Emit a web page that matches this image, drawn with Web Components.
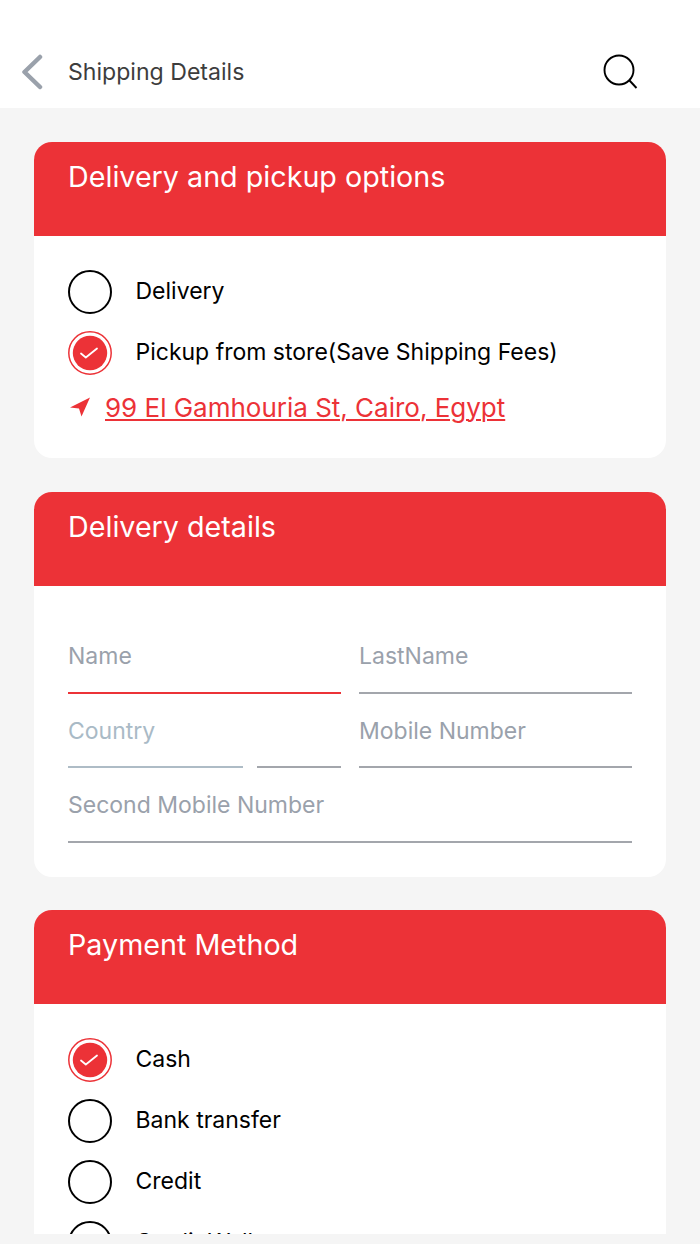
<!DOCTYPE html>
<html><head><meta charset="utf-8">
<style>
html,body{margin:0;padding:0;background:#f5f5f5}
body{width:700px;height:1244px;overflow:hidden;font-family:Inter,"Noto Sans",sans-serif}
.rows{display:flex;flex-direction:column;gap:17px;padding:34px 0}
.link{display:flex;align-items:center;gap:15px;height:32px;color:#ec3237;font-size:26px}
.link u{position:relative;top:-1px;text-underline-offset:2px;text-decoration-thickness:1.5px;letter-spacing:-.01px}
.link svg{display:block;flex:none}
.form{display:grid;grid-template-columns:273px 273px;column-gap:18px;padding:34px 0 33.5px}
.full{grid-column:1 / 3}
.pair{display:flex;gap:14px}
.pair form-field:first-child{width:175px;flex:none}
.pair form-field:last-child{flex:1}
.third{margin-top:-.5px}
</style></head><body>
<app-screen>
  <app-header heading="Shipping Details"></app-header>
  <app-content>
    <app-card heading="Delivery and pickup options">
      <div class="rows">
        <radio-row label="Delivery"></radio-row>
        <radio-row label="Pickup from store(Save Shipping Fees)" checked></radio-row>
        <div class="link"><svg width="22" height="22" viewBox="0 0 22 22"><path d="M22 .5 L2 10.5 L11 11.5 L13.5 19.5 Z" fill="#ec3237"/></svg><u>99 El Gamhouria St, Cairo, Egypt</u></div>
      </div>
    </app-card>
    <app-card heading="Delivery details">
      <div class="form">
        <form-field label="Name" active></form-field>
        <form-field label="LastName"></form-field>
        <div class="pair"><form-field label="Country" pale></form-field><form-field label=""></form-field></div>
        <form-field label="Mobile Number"></form-field>
        <form-field class="full" label="Second Mobile Number"></form-field>
      </div>
    </app-card>
    <app-card class="third" heading="Payment Method">
      <div class="rows">
        <radio-row label="Cash" checked></radio-row>
        <radio-row label="Bank transfer"></radio-row>
        <radio-row label="Credit"></radio-row>
        <radio-row label="Credit Wallet"></radio-row>
      </div>
    </app-card>
  </app-content>
</app-screen>
<script>
const def=(n,css,html)=>{customElements.define(n,class extends HTMLElement{
  constructor(){super();this.attachShadow({mode:'open'});}
  connectedCallback(){this.shadowRoot.innerHTML='<style>'+css+'</style>'+(typeof html==='function'?html(this):html);}
});};
def('app-screen',`:host{display:block;height:1234px;overflow:hidden}`,`<slot></slot>`);
def('app-content',`:host{display:flex;flex-direction:column;gap:33.75px;padding:34px 34px 0}`,`<slot></slot>`);
def('app-header',`:host{display:flex;align-items:center;height:108px;box-sizing:border-box;padding:35px 62px 0 21px;background:#fff}
 .t{flex:1;margin-left:25px;font-size:23.1px;color:#3d3d3d}
 svg{display:block}`,
 h=>`<svg width="22" height="36" viewBox="0 0 22 36"><path d="M19 3 L3.5 18 L19 33" fill="none" stroke="#9aa1ab" stroke-width="4.5" stroke-linecap="round" stroke-linejoin="round"/></svg><span class="t">${h.getAttribute('heading')}</span>
 <svg width="35" height="36" viewBox="0 0 35 36"><circle cx="16" cy="16" r="14.5" fill="none" stroke="#000" stroke-width="1.9"/><path d="M26.5 26.5 L33.5 34" stroke="#000" stroke-width="1.9"/></svg>`);
def('app-card',`:host{display:block;background:#fff;border-radius:18px;overflow:hidden;flex:none}
 .h{background:#ec3237;height:94px;box-sizing:border-box;padding:17px 34px 0;color:#fff;font-size:28.7px;line-height:36px}
 .b{padding:0 34px}`,
 h=>`<div class="h">${h.getAttribute('heading')}</div><div class="b"><slot></slot></div>`);
def('radio-row',`:host{display:flex;align-items:center;gap:23.5px;height:44px;font-size:23px;color:#000}
 svg{display:block;flex:none}
 span{margin-bottom:1.5px}`,
 h=>(h.hasAttribute('checked')
  ?`<svg width="44" height="44" viewBox="0 0 44 44"><circle cx="22" cy="22" r="21.2" fill="none" stroke="#ec3237" stroke-width="1.5"/><circle cx="22" cy="22" r="17.2" fill="#ec3237"/><path d="M13 22.5 L17.8 26.5 L29 17.5" fill="none" stroke="#fff" stroke-width="1.8" stroke-linecap="round" stroke-linejoin="round"/></svg>`
  :`<svg width="44" height="44" viewBox="0 0 44 44"><circle cx="22" cy="22" r="21" fill="none" stroke="#000" stroke-width="2"/></svg>`)+`<span>${h.getAttribute('label')}</span>`);
def('form-field',`:host{display:block;height:74.5px;box-sizing:border-box}
 .l{height:74px;box-sizing:border-box;padding-top:22.5px;line-height:28px;font-size:23px;color:#9aa1ab;border-bottom:2px solid #a3a6ac}
 :host([active]) .l{border-bottom-color:#ec3237}
 :host([pale]) .l{color:#a9bac6;border-bottom-color:#aebcc6}`,
 h=>`<div class="l">${h.getAttribute('label')||'&nbsp;'}</div>`);
</script>
</body></html>
